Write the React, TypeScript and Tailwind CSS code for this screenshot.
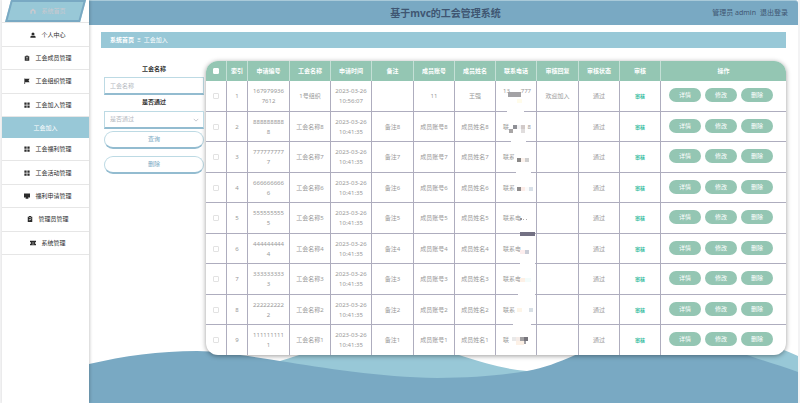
import type { ReactNode } from "react";

type IconName = "home" | "user" | "bag" | "flag" | "grid" | "monitor" | "claim" | "ticket";

const iconShapes: Record<IconName, ReactNode> = {
  home: <path d="M8 1 15 7v8h-4v-5a3 3 0 0 0-6 0v5H1V7z" />,
  user: (
    <>
      <circle cx="8" cy="5" r="4" />
      <path d="M1 15v-2c0-2 2-3 4.500-3.200a5 5 0 0 0 5 0C13 10 15 11 15 13v2z" />
    </>
  ),
  bag: (
    <path
      fillRule="evenodd"
      d="M5 1h6v2h3v12H2V3h3zM6.500 2.300V3h3v-.7zM5 6v1.500h6V6zm0 4v1.500h6V10z"
    />
  ),
  flag: <path d="M1 1h2v1h12l-3 4.500 3 4.500H3v5H1z" />,
  grid: <path d="M1 1h6v6H1zM9 1h6v6H9zM1 9h6v6H1zM9 9h6v6H9z" />,
  monitor: <path d="M0 1h16v11h-5l1 3H4l1-3H0z" />,
  claim: (
    <path
      fillRule="evenodd"
      d="M5 0h6v2h3v14H2V2h3zM5 3v1.500h6V3zM4.500 9 7.500 12.300 12 7.500l-1.200-1.200-3.300 3.500-1.800-2z"
    />
  ),
  ticket: (
    <path
      fillRule="evenodd"
      d="M0 2h16v3.500a2.500 2.500 0 0 0 0 5V14H0v-3.500a2.500 2.500 0 0 0 0-5zM5 5v1h6V5zm0 5v1h6v-1z"
    />
  ),
};

function Icon({ name }: { name: IconName }) {
  return (
    <svg viewBox="0 0 16 16" className="size-1.5 shrink-0 fill-current" aria-hidden="true">
      {iconShapes[name]}
    </svg>
  );
}

const topMenu: { icon: IconName; label: string }[] = [
  { icon: "user", label: "个人中心" },
  { icon: "bag", label: "工会成员管理" },
  { icon: "flag", label: "工会组织管理" },
  { icon: "grid", label: "工会加入管理" },
];

const bottomMenu: { icon: IconName; label: string }[] = [
  { icon: "grid", label: "工会福利管理" },
  { icon: "grid", label: "工会活动管理" },
  { icon: "monitor", label: "福利申请管理" },
  { icon: "claim", label: "管理员管理" },
  { icon: "ticket", label: "系统管理" },
];

function MenuItem({ icon, label }: { icon: IconName; label: string }) {
  return (
    <a
      href="#"
      className="flex items-center justify-center gap-[5px] border-b border-[#e6e6e6] pl-[5px] text-[#2b2b2b]"
    >
      <Icon name={icon} />
      {label}
    </a>
  );
}

function Sidebar() {
  return (
    <nav className="z-10 w-[87px] shrink-0 bg-white leading-[10px] shadow-[1px_0_3px_rgba(0,0,0,0.2)]">
      <div className="grid h-[117px] grid-rows-5">
        <a
          href="#"
          className="relative isolate flex items-center justify-center gap-[5px] border-b border-[#e6e6e6] pl-[5px] text-[#c9c9cf] before:absolute before:inset-x-[6px] before:inset-y-0 before:-z-10 before:-skew-x-15 before:border-2 before:border-[#79a9c3] before:bg-[#98c8d7]"
        >
          <Icon name="home" />
          系统首页
        </a>
        {topMenu.map((item) => (
          <MenuItem key={item.label} {...item} />
        ))}
      </div>
      <a href="#" className="flex h-[21px] items-center justify-center bg-[#98c8d7] text-white">
        工会加入
      </a>
      <div className="grid h-[117px] grid-rows-5">
        {bottomMenu.map((item) => (
          <MenuItem key={item.label} {...item} />
        ))}
      </div>
    </nav>
  );
}

const fieldBox =
  "h-[18px] w-full appearance-none border border-b-2 border-[#bddae4] border-b-[#93bcd0] bg-white px-[5px] text-[#b4b8c0] outline-none placeholder:text-[#b4b8c0]";
const formButton =
  "h-[18px] w-full rounded-full border border-b-2 border-[#bddae4] border-b-[#93bcd0] bg-white text-[#79a9c3]";

function SearchForm() {
  return (
    <form className="flex w-[100px] shrink-0 flex-col pt-[3px]" onSubmit={(e) => e.preventDefault()}>
      <label htmlFor="name" className="text-center leading-[10px] font-bold text-[#333]">
        工会名称
      </label>
      <input id="name" placeholder="工会名称" className={`mt-[3px] ${fieldBox}`} />
      <label htmlFor="passed" className="mt-[2px] text-center leading-[10px] font-bold text-[#333]">
        是否通过
      </label>
      <div className="relative mt-[4px]">
        <select id="passed" defaultValue="" className={`block ${fieldBox}`}>
          <option value="">是否通过</option>
          <option value="yes">通过</option>
          <option value="no">未通过</option>
        </select>
        <svg
          viewBox="0 0 8 8"
          className="pointer-events-none absolute top-[6px] right-[5px] size-1.5 fill-none stroke-[#b4b8c0]"
          aria-hidden="true"
        >
          <path d="M1 2.500 4 5.500 7 2.500" />
        </svg>
      </div>
      <button className={`mt-[2px] ${formButton}`}>查询</button>
      <button className={`mt-[7px] ${formButton}`}>删除</button>
    </form>
  );
}

/** x, y, width, height, colour inside a phone cell */
type Block = [number, number, number, number, string];

const masks: Block[][] = [
  [[12, 11, 13, 5, "#a3a2a5"], [21, 18, 5, 4, "#fffceb"], [11, 28, 17, 4, "#fff"]],
  [
    [13, 17, 4, 4, "#a9a6a6"], [17, 13, 4, 4, "#8f9096"], [21, 13, 4, 4, "#f4f4f6"],
    [25, 13, 4, 4, "#d2cac9"], [25, 17, 4, 4, "#e0dddd"], [15, 28, 15, 4, "#fff"],
  ],
  [
    [18, 13, 3, 5, "#fff"], [21, 16, 4, 4, "#8b8988"], [25, 16, 4, 4, "#fdf2ec"],
    [29, 16, 4, 4, "#cfcfcf"], [20, 28, 15, 4, "#fff"],
  ],
  [[21, 14, 4, 4, "#8f8c8c"], [25, 14, 4, 4, "#fdece8"], [29, 14, 4, 4, "#fbfbfb"], [33, 14, 4, 4, "#d8e0e8"]],
  [[24, 15, 2, 2, "#96949a"], [27, 16, 1, 1, "#b0b0b0"], [30, 16, 1, 1, "#b0b0b0"], [24, 29, 15, 4, "#737184"]],
  [[24, 16, 5, 4, "#fdeeee"], [29, 16, 4, 4, "#c9ccd6"], [24, 28, 15, 4, "#fff"]],
  [[24, 14, 5, 4, "#fdf0e6"], [29, 14, 6, 4, "#f3fcfb"], [22, 28, 17, 4, "#fff"]],
  [[21, 13, 5, 4, "#fdf5e8"], [33, 13, 4, 4, "#d8e0e6"], [17, 28, 18, 4, "#fff"]],
  [
    [16, 12, 4, 4, "#e9e9e9"], [20, 12, 4, 4, "#f5ece8"], [20, 16, 8, 4, "#fdf1e6"],
    [24, 12, 4, 4, "#a3a1a3"], [28, 12, 4, 4, "#77757c"], [28, 16, 2, 3, "#a09fa4"],
  ],
];

const phones: [string, string][] = [
  ["13", "777"],
  ["联", "8"],
  ["联系", ""],
  ["联系", ""],
  ["联系电", ""],
  ["联系电", ""],
  ["联系电", ""],
  ["联系", ""],
  ["联", ""],
];

const rows = masks.map((mask, i) => {
  const first = i === 0;
  const id = 10 - i - 1;
  return {
    serial: first ? "1679799367612" : String(id).repeat(10),
    union: first ? "1号组织" : `工会名称${id}`,
    time: first ? "2023-03-26 10:56:07" : "2023-03-26 10:41:35",
    note: first ? "" : `备注${id}`,
    account: first ? "11" : `成员账号${id}`,
    member: first ? "王强" : `成员姓名${id}`,
    phone: phones[i],
    reply: first ? "欢迎加入" : "",
    mask,
  };
});

const headings = [
  "索引", "申请编号", "工会名称", "申请时间", "备注", "成员账号",
  "成员姓名", "联系电话", "审核回复", "审核状态", "审核", "操作",
];

const checkbox = "block mx-auto size-1.5 appearance-none rounded-[1px] border bg-white checked:bg-[#79a9c3]";

function DataTable() {
  return (
    <div className="min-w-0 flex-1 overflow-hidden rounded-[12px] bg-white shadow-[0_1px_5px_rgba(0,0,0,0.4)]">
      <table className="w-full table-fixed border-separate border-spacing-0 text-center leading-[10px] text-[#999]">
        <colgroup>
          <col className="w-[21px]" />
          <col className="w-[21px]" />
          <col className="w-[42px]" />
          <col className="w-[41px]" />
          <col className="w-[41px]" />
          <col className="w-[42px]" />
          <col className="w-[41px]" />
          <col className="w-[41px]" />
          <col className="w-[41px]" />
          <col className="w-[42px]" />
          <col className="w-[41px]" />
          <col className="w-[41px]" />
          <col />
        </colgroup>
        <thead className="bg-[#94c6b3] text-white [&_th]:border-r [&_th]:border-[#c4e0d6] [&_th:last-child]:border-r-0">
          <tr className="h-5">
            <th>
              <input type="checkbox" aria-label="全选" className={`${checkbox} border-white`} />
            </th>
            {headings.map((h) => (
              <th key={h} className="font-bold">
                {h}
              </th>
            ))}
          </tr>
        </thead>
        <tbody className="[&_td]:border-r [&_td]:border-b [&_td]:border-[#aeadbe] [&_td:last-child]:border-r-0 [&_tr:last-child>td]:border-b-0">
          {rows.map((row, i) => (
            <tr key={row.serial} className="h-[31px] even:h-[30px] last:h-[30px]">
              <td>
                <input type="checkbox" aria-label={`选择 ${i + 1}`} className={`${checkbox} border-[#e2e2e2]`} />
              </td>
              <td>{i + 1}</td>
              <td className="px-[4px] break-all">{row.serial}</td>
              <td>{row.union}</td>
              <td className="px-[3px]">{row.time}</td>
              <td>{row.note}</td>
              <td>{row.account}</td>
              <td>{row.member}</td>
              <td className="relative">
                <span className={`flex justify-between pr-[5px] pl-[7px] ${i === 0 ? "pb-2.5" : ""}`}>
                  <span>{row.phone[0]}</span>
                  <span>{row.phone[1]}</span>
                </span>
                <svg className="absolute top-0 left-0 h-[31px] w-10 overflow-visible" aria-hidden="true">
                  {row.mask.map(([x, y, w, h, fill], k) => (
                    <rect key={k} x={x} y={y} width={w} height={h} fill={fill} />
                  ))}
                </svg>
              </td>
              <td>{row.reply}</td>
              <td>通过</td>
              <td>
                <button className="text-[5px] font-bold text-[#33bb9d]">审核</button>
              </td>
              <td>
                <div className="flex gap-1 pb-[2px] pl-2 text-white">
                  <button className="h-3.5 w-8 rounded-full bg-[#94c6b3]">详情</button>
                  <button className="h-3.5 w-8 rounded-full bg-[#94c6b3]">修改</button>
                  <button className="h-3.5 w-8 rounded-full bg-[#94c6b3]">删除</button>
                </div>
              </td>
            </tr>
          ))}
        </tbody>
      </table>
    </div>
  );
}

function Waves() {
  return (
    <svg
      viewBox="0 0 709 60"
      preserveAspectRatio="none"
      className="absolute inset-x-0 bottom-0 -z-10 h-[60px] w-full"
      aria-hidden="true"
    >
      <path
        d="M0 60V50C80 42 150 28 191 18C198 16 203 14 207 13C240 3 270-6 305-3C345 2 360 9 373 13C395 20 415 26 438 28C520 36 570 0 620-6C655-6 680 0 709 13V60Z"
        fill="#98c8d7"
      />
      <path
        d="M0 21C35 13 70 8 108 8C130 8 165 14 191 18C235 25 290 34 348 35C385 35 415 32 438 28C455 25 470 19 484 13C520-4 605-7 661 13C678 19 693 23 709 29V60H0Z"
        fill="#79a9c3"
      />
    </svg>
  );
}

export default function App() {
  return (
    <div className="flex min-h-screen bg-[#f3f3f4] px-[2px] pb-px font-['Noto_Sans','Noto_Sans_CJK_SC',sans-serif] text-[6px]">
      <Sidebar />
      <div className="relative isolate flex min-w-0 flex-1 flex-col bg-white">
        <header className="grid h-[25px] grid-cols-[1fr_auto_1fr] items-center rounded-tr-[3px] border-t border-[#a9cad9] bg-[#79a9c3] pr-2.5 pl-3.5 text-[#3f5672]">
          <h1 className="col-start-2 text-[10px] leading-3 font-bold">基于mvc的工会管理系统</h1>
          <div className="flex justify-end gap-1 text-[7px] leading-3">
            <span>管理员 admin</span>
            <a href="#">退出登录</a>
          </div>
        </header>
        <div className="mx-3 mt-[7px] flex h-4 items-center gap-[3px] bg-[#98c8d7] px-[9px] text-white">
          <a href="#" className="font-bold">
            系统首页
          </a>
          <span>Ξ</span>
          <span>工会加入</span>
        </div>
        <main className="mt-[13px] mr-3 mb-12 ml-[15px] flex items-start gap-[2px]">
          <SearchForm />
          <DataTable />
        </main>
        <Waves />
      </div>
    </div>
  );
}
